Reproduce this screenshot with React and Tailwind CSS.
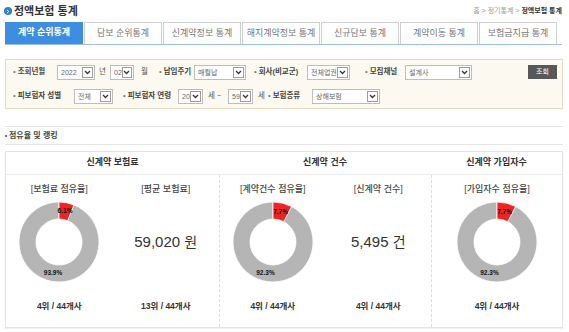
import React from 'react';

const tabs = ['계약 순위통계', '담보 순위통계', '신계약정보 통계', '해지계약정보 통계', '신규담보 통계', '계약이동 통계', '보험금지급 통계'];

const font = { fontFamily: '"Liberation Sans", "Noto Sans CJK KR", sans-serif' };

function Select({ value, w }) {
  return (
    <div className={`flex h-[15px] shrink-0 items-center justify-between border border-[#bdbdbd] bg-white pl-[3px] pr-[1px] ${w}`}>
      <span className="text-[7px] leading-none text-[#666]">{value}</span>
      <span className="flex h-[11px] w-[11px] items-center justify-center border border-[#9c9c9c] bg-white">
        <svg width="7" height="5" viewBox="0 0 7 5">
          <path d="M1 1l2.5 2.5L6 1" stroke="#333" strokeWidth="1.3" fill="none" />
        </svg>
      </span>
    </div>
  );
}

function Label({ children, cls }) {
  return (
    <span className={`shrink-0 whitespace-nowrap text-[7.5px] leading-none font-semibold text-[#444] ${cls}`}>
      <span className="mr-[2px] font-normal text-[#777]">•</span>
      {children}
    </span>
  );
}

function Unit({ children, cls }) {
  return <span className={`shrink-0 whitespace-nowrap text-[7.5px] leading-none text-[#555] ${cls}`}>{children}</span>;
}

function Donut({ pct }) {
  const cx = 41, cy = 41, R = 40, r = 23;
  const a = (pct / 100) * 2 * Math.PI;
  const pt = (rad, ang) => [cx + rad * Math.sin(ang), cy - rad * Math.cos(ang)];
  const sector = (a0, a1) => {
    const large = a1 - a0 > Math.PI ? 1 : 0;
    const [x0, y0] = pt(R, a0);
    const [x1, y1] = pt(R, a1);
    const [x2, y2] = pt(r, a1);
    const [x3, y3] = pt(r, a0);
    return `M${x0} ${y0}A${R} ${R} 0 ${large} 1 ${x1} ${y1}L${x2} ${y2}A${r} ${r} 0 ${large} 0 ${x3} ${y3}Z`;
  };
  const [lx1, ly1] = pt(31.5, a / 2);
  const [lx2, ly2] = pt(31.5, a + (2 * Math.PI - a) / 2);
  const rest = (100 - pct).toFixed(1);
  return (
    <svg width="82" height="82" viewBox="0 0 82 82">
      <path d={sector(a, 2 * Math.PI - 0.0001)} fill="#b5b5b5" stroke="#fff" strokeWidth="0.8" />
      <path d={sector(0, a)} fill="#ee2424" stroke="#fff" strokeWidth="0.8" />
      <text x={lx1} y={ly1 + 2.2} textAnchor="middle" fontSize="6.5" fontWeight="700" fill="#111" fontFamily="Liberation Sans, sans-serif">{pct.toFixed(1)}%</text>
      <text x={lx2} y={ly2 + 2.2} textAnchor="middle" fontSize="6.5" fontWeight="700" fill="#111" fontFamily="Liberation Sans, sans-serif">{rest}%</text>
    </svg>
  );
}

function Cell({ label, rank, children }) {
  return (
    <div className="flex flex-col items-center pt-[8px]">
      <div className="h-[12px] text-[9px] leading-[12px] font-medium text-[#444] whitespace-nowrap">{label}</div>
      <div className="mt-[6px] flex h-[82px] items-center justify-center">{children}</div>
      <div className="mt-[17px] h-[12px] text-[8.5px] leading-[12px] font-bold text-[#333] whitespace-nowrap">{rank}</div>
    </div>
  );
}

function Value({ num, unit }) {
  return (
    <span className="text-[15px] text-[#333] whitespace-nowrap">
      {num} <span className="text-[14px]">{unit}</span>
    </span>
  );
}

export default function App() {
  return (
    <div className="h-[332px] w-[569px] overflow-hidden bg-white" style={font}>
      {/* title */}
      <div className="flex h-[22px] items-center justify-between pl-[4px] pr-[7px]">
        <div className="flex items-center gap-[2px]">
          <span className="flex h-[8px] w-[8px] items-center justify-center rounded-full bg-[#2d7fd3]">
            <svg width="4" height="5" viewBox="0 0 4 5">
              <path d="M1 0.8L2.8 2.5L1 4.2" stroke="#fff" strokeWidth="1" fill="none" />
            </svg>
          </span>
          <span className="text-[11px] font-bold text-[#333]">정액보험 통계</span>
        </div>
        <div className="text-[7px] text-[#999]">
          홈 &gt; 정기통계 &gt; <span className="font-bold text-[#333]">정액보험 통계</span>
        </div>
      </div>

      {/* tabs */}
      <div className="mx-[5px] mr-[7px] flex h-[23px] gap-[1px] border-b border-[#9fc1e8]">
        {tabs.map((t, i) => (
          <div
            key={t}
            className={`flex w-[78px] items-center justify-center text-[9px] whitespace-nowrap ${
              i === 0 ? 'bg-[#3d8ee0] font-bold text-white' : 'border border-b-0 border-[#cfcfcf] bg-white text-[#777]'
            }`}
          >
            {t}
          </div>
        ))}
      </div>

      {/* filters */}
      <div className="mx-[5px] mr-[6px] mt-[14px] border border-[#e4dbc2] bg-[#fcfaf0] pl-[7px] pr-[5px]">
        <div className="flex h-[24px] items-center">
          <Label cls="w-[44px]">조회년월</Label>
          <Select value="2022" w="w-[38px]" />
          <Unit cls="w-[15px] pl-[4px]">년</Unit>
          <Select value="02" w="w-[24px]" />
          <Unit cls="w-[25px] pl-[7px]">월</Unit>
          <Label cls="w-[35px]">납입주기</Label>
          <Select value="매월납" w="w-[52px]" />
          <Label cls="ml-[8px] w-[53px]">회사(비교군)</Label>
          <Select value="전체업권" w="w-[43px]" />
          <Label cls="ml-[15px] w-[40px]">모집채널</Label>
          <Select value="설계사" w="w-[67px]" />
          <button className="ml-auto flex h-[14px] w-[29px] items-center justify-center bg-[#585858] text-[7px] text-white">조회</button>
        </div>
        <div className="flex h-[24px] items-center">
          <Label cls="w-[61px]">피보험자 성별</Label>
          <Select value="전체" w="w-[39px]" />
          <Label cls="ml-[10px] w-[55px]">피보험자 연령</Label>
          <Select value="20" w="w-[25px]" />
          <Unit cls="w-[25px] pl-[5px]">세 ~</Unit>
          <Select value="59" w="w-[25px]" />
          <Unit cls="w-[13px] pl-[5px]">세</Unit>
          <Label cls="ml-[2px] w-[44px]">보험종류</Label>
          <Select value="상해보험" w="w-[68px]" />
        </div>
      </div>

      {/* section */}
      <div className="mx-[5px] mr-[6px] mt-[17px] flex h-[19px] items-center border-y border-[#e6e6e6]">
        <span className="mr-[2px] h-[2px] w-[2px] bg-[#2d7fd3]" />
        <span className="text-[8px] font-semibold text-[#444]">점유율 및 랭킹</span>
      </div>

      {/* card */}
      <div className="mx-[5px] mr-[6px] mt-[6px] grid h-[177px] grid-cols-[213px_212px_1fr] border border-[#e3e3e3] shadow-[0_1px_1px_rgba(0,0,0,0.05)]">
        <div className="flex flex-col">
          <div className="flex h-[23px] items-center justify-center border-b border-[#ececec] text-[9px] font-semibold text-[#333]">신계약 보험료</div>
          <div className="grid flex-1 grid-cols-2">
            <Cell label="[보험료 점유율]" rank="4위 / 44개사"><Donut pct={6.1} /></Cell>
            <Cell label="[평균 보험료]" rank="13위 / 44개사"><Value num="59,020" unit="원" /></Cell>
          </div>
        </div>
        <div className="flex flex-col">
          <div className="flex h-[23px] items-center justify-center border-b border-[#ececec] text-[9px] font-semibold text-[#333]">신계약 건수</div>
          <div className="grid flex-1 grid-cols-2 border-l border-dashed border-[#dcdcdc]">
            <Cell label="[계약건수 점유율]" rank="4위 / 44개사"><Donut pct={7.7} /></Cell>
            <Cell label="[신계약 건수]" rank="4위 / 44개사"><Value num="5,495" unit="건" /></Cell>
          </div>
        </div>
        <div className="flex flex-col">
          <div className="flex h-[23px] items-center justify-center border-b border-[#ececec] text-[9px] font-semibold text-[#333]">신계약 가입자수</div>
          <div className="flex flex-1 justify-center border-l border-dashed border-[#dcdcdc]">
            <Cell label="[가입자수 점유율]" rank="4위 / 44개사"><Donut pct={7.7} /></Cell>
          </div>
        </div>
      </div>
    </div>
  );
}
